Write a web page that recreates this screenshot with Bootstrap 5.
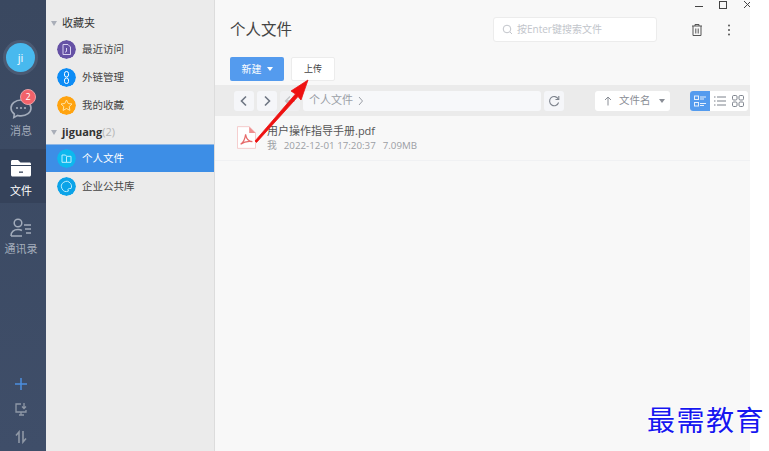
<!DOCTYPE html>
<html lang="zh">
<head>
  <meta charset="UTF-8">
  <meta name="viewport" content="width=device-width, initial-scale=1.0">
  <title>个人文件</title>
  <link href="https://cdn.jsdelivr.net/npm/bootstrap@5.3.0/dist/css/bootstrap.min.css" rel="stylesheet">
  <style>
    html, body { height: 451px; overflow: hidden; background: #fff; }
    body { font-family: "Open Sans", "Noto Sans CJK SC", sans-serif; width: 769px; position: relative; }
    .app-win { width: 750px; height: 451px; }

    /* left rail */
    .rail { width: 46px; background: linear-gradient(#3a4860, #3f4e69); padding-top: 40px; }
    .avatar-ring { width: 35px; height: 35px; border-radius: 50%; background: #4b5a73; margin-left: 3px; padding: 3px; }
    .avatar-dot { width: 29px; height: 29px; border-radius: 50%; background: #48b9ee; color: #fff; font-size: 11px; line-height: 29px; text-align: center; }
    .rail-item { color: #a3acbb; font-size: 11px; line-height: 13px; position: relative; padding-right: 4px; }
    .rail-item.on { background: #35425a; color: #fff; height: 54px; }
    .rail-msg { margin-top: 14px; height: 60px; padding-top: 4px; }
    .rail-msg svg { margin-bottom: 3px; }
    .rail-file svg { margin-bottom: 6px; }
    .rail-file { padding-bottom: 6px; }
    .rail-contacts { padding-top: 14px; }
    .rail-contacts svg { margin-bottom: 3px; }
    .msg-badge { position: absolute; top: 0; left: 20px; width: 16px; height: 16px; border-radius: 50%; background: #f2626a; border: 1px solid #e9a0a6; color: #fff; font-size: 9px; line-height: 14px; text-align: center; }
    .rail-tools { padding: 0 4px 7px 0; gap: 11px; }
    .rail-tools svg:last-child { margin-top: 3px; }

    /* tree panel */
    .tree { width: 169px; background: #ebebeb; border-right: 1px solid #dcdcdc; padding-top: 14px; color: #444; font-size: 10.5px; }
    .tree-head { height: 18px; padding-left: 5px; font-size: 11px; color: #333; }
    .tree-head b { font-size: 11px; font-weight: 700; }
    .tree-head span.cnt { color: #b4b4b4; font-size: 11px; }
    .head-text { padding-top: 1px; }
    .caret-g { width: 0; height: 0; border-left: 3px solid transparent; border-right: 3px solid transparent; border-top: 5px solid #a9aeb8; margin-right: 5px; }
    .tree-row { height: 28px; padding-left: 11px; gap: 6px; }
    .tree-row span { padding-top: 1px; }
    .tree-row.on { background: #3d8ee6; color: #fff; border-top: 1px solid #8db7e6; }
    .tree-ic { width: 19px; height: 19px; border-radius: 50%; flex: none; }
    .gap-head { margin-top: 3px; }
    .gap-row { margin-top: 3px; }
    .gap-group { margin-top: 4px; }

    /* main */
    .main-pane { background: #f8f8f8; min-width: 0; position: relative; overflow: hidden; }
    .win-btns { position: absolute; top: 0; right: -2px; gap: 12px; height: 12px; }
    .win-close { margin-left: 2px; }
    .head-line { height: 57px; padding: 2px 15px 0; }
    .page-title { font-size: 15.5px; color: #444; margin: 0; font-weight: 400; }
    .search-box { width: 164px; height: 25px; background: #fff; border: 1px solid #ececec; border-radius: 3px; margin-left: auto; padding-left: 8px; gap: 4px; color: #c2c5cb; font-size: 10px; margin-right: 33px; }
    .more-dots { margin-left: 23px; margin-right: 4px; }
    .action-line { height: 28px; padding-left: 15px; gap: 7px; }
    .btn-new { width: 54px; height: 24px; background: #549bee; border: 0; color: #fff; font-size: 10px; border-radius: 2px; padding: 0; gap: 5px; }
    .btn-up { width: 44px; height: 24px; background: #fff; border: 1px solid #ececec; color: #444; font-size: 9px; border-radius: 2px; padding: 0; }
    .caret-w { width: 0; height: 0; border-left: 3px solid transparent; border-right: 3px solid transparent; border-top: 4px solid #fff; }
    .path-line { height: 31px; background: #ebebeb; padding-left: 19px; gap: 3px; }
    .sq-btn { width: 20px; height: 20px; background: #f5f6f9; border-radius: 3px; flex: none; }
    .path-box { width: 238px; height: 20px; background: #f7f8fa; border-radius: 3px; color: #9a9ea6; font-size: 11px; padding-left: 6px; gap: 4px; }
    .sort-box { width: 75px; height: 20px; background: #fff; border-radius: 3px; margin-left: 28px; color: #8a8e96; font-size: 10.5px; gap: 7px; padding-left: 9px; }
    .caret-d { width: 0; height: 0; border-left: 3px solid transparent; border-right: 3px solid transparent; border-top: 4px solid #8a8e96; margin-left: 1px; }
    .view-grp { margin-left: 17px; height: 20px; background: #fff; border-radius: 3px; width: 58px; overflow: hidden; }
    .view-btn { width: 20px; height: 20px; flex: none; }
    .view-btn.on { background: #549bee; }
    .view-btn.tight { margin-left: -2px; }
    .file-row { height: 45px; border-bottom: 1px solid #f0f1f3; padding: 0 0 2px 22px; gap: 11px; }
    .file-name { font-size: 11px; color: #555; line-height: 15px; }
    .file-meta { font-size: 9.75px; color: #9b9ea4; line-height: 13px; margin-top: 1px; }
    .file-meta span { margin-right: 7px; }

    /* overlays on the screenshot */
    .red-arrow { position: absolute; left: 250px; top: 76px; pointer-events: none; }
    .water-mark { position: absolute; left: 647px; top: 402px; font-family: "Noto Sans CJK SC", sans-serif; font-size: 28px; line-height: 34px; letter-spacing: 1.5px; color: #1616f0; white-space: nowrap;
      text-shadow: 0 0 2px #fff, 0 0 2px #fff, 0 0 3px #fff; }
  </style>
</head>
<body>
  <div class="app-win d-flex">
    <!-- left rail -->
    <div class="rail d-flex flex-column flex-shrink-0">
      <div class="avatar-ring"><div class="avatar-dot">ji</div></div>
      <div class="rail-item rail-msg d-flex flex-column align-items-center">
        <svg width="24" height="28" viewBox="0 0 24 28"><path d="M12 7c-5.500 0-10 3.600-10 8 0 2.500 1.300 4.500 3.300 6l-.5 3.500 4-2.100c1 .3 2 .5 3.200.5 5.500 0 10-3.500 10-7.900S17.500 7 12 7z" fill="none" stroke="#a3acbb" stroke-width="1.600"/><circle cx="8" cy="15" r="1.100" fill="#a3acbb"/><circle cx="12" cy="15" r="1.100" fill="#a3acbb"/><circle cx="16" cy="15" r="1.100" fill="#a3acbb"/></svg>
        <span class="msg-badge">2</span>
        <span>消息</span>
      </div>
      <div class="rail-item rail-file on d-flex flex-column align-items-center justify-content-end">
        <svg width="22" height="20" viewBox="0 0 22 20"><path d="M1 3.500C1 2.500 1.800 2 2.500 2H8l2.500 2.500h9c.8 0 1.500.6 1.500 1.500v1H1z" fill="#fff"/><path d="M1 8h20v9c0 .9-.7 1.500-1.500 1.500h-17C1.700 18.500 1 17.900 1 17z" fill="#fff"/><rect x="9" y="13.500" width="4" height="1.300" fill="#35425a"/></svg>
        <span>文件</span>
      </div>
      <div class="rail-item rail-contacts d-flex flex-column align-items-center">
        <svg width="24" height="22" viewBox="0 0 24 22"><circle cx="9" cy="6" r="3.800" fill="none" stroke="#a3acbb" stroke-width="1.500"/><path d="M2 19c0-4.200 3-6.500 7-6.500 1.500 0 2.800.3 3.900 1M2 19h11" fill="none" stroke="#a3acbb" stroke-width="1.500"/><path d="M15 8h7M16 12h6M17 16h5" stroke="#a3acbb" stroke-width="1.400"/></svg>
        <span>通讯录</span>
      </div>
      <div class="rail-tools mt-auto d-flex flex-column align-items-center">
        <svg width="14" height="14" viewBox="0 0 14 14"><path d="M7 1v12M1 7h12" stroke="#4c8fe0" stroke-width="1.500"/></svg>
        <svg width="14" height="14" viewBox="0 0 14 14"><path d="M7 2H2v8h10V8M5 13h5M7 10v3" fill="none" stroke="#8f98a6" stroke-width="1.300"/><path d="M10 1v5M8 4.500l2 2 2-2" fill="none" stroke="#8f98a6" stroke-width="1.300"/></svg>
        <svg width="14" height="14" viewBox="0 0 14 14"><path d="M5 13V2L2 5.500M9 1v11l3-3.500" fill="none" stroke="#8f98a6" stroke-width="1.600"/></svg>
      </div>
    </div>

    <!-- folder tree -->
    <div class="tree flex-shrink-0">
      <div class="tree-head d-flex align-items-center"><i class="caret-g"></i><span class="head-text">收藏夹</span></div>
      <div class="tree-row d-flex align-items-center gap-row">
        <svg class="tree-ic" viewBox="0 0 19 19"><circle cx="9.500" cy="9.500" r="9.500" fill="#6551a5"/><path d="M6 4.500h5l2.500 2.500v7.500H6z" fill="none" stroke="#d8d0f0" stroke-width="1"/><path d="M9.500 8v3.500l-1.500.8" fill="none" stroke="#d8d0f0" stroke-width="1"/></svg>
        <span>最近访问</span>
      </div>
      <div class="tree-row d-flex align-items-center">
        <svg class="tree-ic" viewBox="0 0 19 19"><circle cx="9.500" cy="9.500" r="9.500" fill="#0d8cf5"/><rect x="7.500" y="3.500" width="4" height="5.500" rx="2" fill="none" stroke="#fff" stroke-width="1"/><rect x="7.500" y="10" width="4" height="5.500" rx="2" fill="none" stroke="#fff" stroke-width="1"/></svg>
        <span>外链管理</span>
      </div>
      <div class="tree-row d-flex align-items-center">
        <svg class="tree-ic" viewBox="0 0 19 19"><circle cx="9.500" cy="9.500" r="9.500" fill="#ffa30f"/><path d="M9.500 4l1.700 3.500 3.800.5-2.800 2.600.7 3.800-3.400-1.900-3.400 1.900.7-3.800L4 8l3.800-.5z" fill="none" stroke="#ffe3a8" stroke-width="1"/></svg>
        <span>我的收藏</span>
      </div>
      <div class="tree-head d-flex align-items-center gap-group"><i class="caret-g"></i><b>jiguang</b><span class="cnt">(2)</span></div>
      <div class="tree-row on d-flex align-items-center gap-head">
        <svg class="tree-ic" viewBox="0 0 19 19"><circle cx="9.500" cy="9.500" r="9.500" fill="#0db8ee"/><path d="M5 6h3.500l1 1.300H14v6H5z" fill="none" stroke="#bdeeff" stroke-width="1"/><path d="M9.500 7.500v5.500" stroke="#bdeeff" stroke-width="1"/></svg>
        <span>个人文件</span>
      </div>
      <div class="tree-row d-flex align-items-center">
        <svg class="tree-ic" viewBox="0 0 19 19"><circle cx="9.500" cy="9.500" r="9.500" fill="#0ba3e8"/><path d="M13.500 6.500a5 5 0 1 0-2 7.500c-1-1.500-.5-2.500 1-2.500h1.500c1-2 .5-3.500-.5-5z" fill="none" stroke="#bdeeff" stroke-width="1"/></svg>
        <span>企业公共库</span>
      </div>
    </div>

    <!-- main pane -->
    <div class="main-pane flex-grow-1 d-flex flex-column">
      <div class="win-btns d-flex align-items-center">
        <svg width="12" height="12" viewBox="0 0 12 12"><path d="M2 6.500h8" stroke="#444" stroke-width="1"/></svg>
        <svg width="12" height="12" viewBox="0 0 12 12"><rect x="2.500" y="1.500" width="7" height="7" fill="none" stroke="#444" stroke-width="1"/></svg>
        <svg class="win-close" width="9" height="12" viewBox="0 0 9 12"><path d="M1 1l7 7M8 1L1 8" stroke="#444" stroke-width="1"/></svg>
      </div>
      <div class="head-line d-flex align-items-center">
        <h1 class="page-title">个人文件</h1>
        <div class="search-box d-flex align-items-center">
          <svg width="11" height="11" viewBox="0 0 11 11"><circle cx="5" cy="5" r="3.800" fill="none" stroke="#c2c5cb" stroke-width="1"/><path d="M8 8l2 2" stroke="#c2c5cb" stroke-width="1"/></svg>
          <span>按Enter键搜索文件</span>
        </div>
        <svg width="14" height="14" viewBox="0 0 14 14"><path d="M2 3h10M5 3V1.500h4V3M3 3v9.500h8V3M5.800 5.500v5M8.200 5.500v5" fill="none" stroke="#555" stroke-width="1"/></svg>
        <svg class="more-dots" width="4" height="14" viewBox="0 0 4 14"><circle cx="2" cy="2.500" r="1" fill="#555"/><circle cx="2" cy="7" r="1" fill="#555"/><circle cx="2" cy="11.500" r="1" fill="#555"/></svg>
      </div>
      <div class="action-line d-flex align-items-start">
        <button class="btn btn-new d-flex align-items-center justify-content-center">新建<i class="caret-w"></i></button>
        <button class="btn btn-up">上传</button>
      </div>
      <div class="path-line d-flex align-items-center">
        <div class="sq-btn d-flex align-items-center justify-content-center"><svg width="10" height="12" viewBox="0 0 10 12"><path d="M7 1.500L2.500 6 7 10.500" fill="none" stroke="#6e7683" stroke-width="1.600"/></svg></div>
        <div class="sq-btn d-flex align-items-center justify-content-center"><svg width="10" height="12" viewBox="0 0 10 12"><path d="M3 1.500L7.500 6 3 10.500" fill="none" stroke="#6e7683" stroke-width="1.600"/></svg></div>
        <div class="sq-btn d-flex align-items-center justify-content-center opacity-50"><svg width="12" height="12" viewBox="0 0 12 12"><path d="M6 1.500L1.500 6 6 10.500M1.500 6H11" fill="none" stroke="#9a9ea6" stroke-width="1.300"/></svg></div>
        <div class="path-box d-flex align-items-center"><span>个人文件</span><svg width="8" height="10" viewBox="0 0 8 10"><path d="M2 1l3.500 4L2 9" fill="none" stroke="#9a9ea6" stroke-width="1"/></svg></div>
        <div class="sq-btn d-flex align-items-center justify-content-center"><svg width="12" height="12" viewBox="0 0 12 12"><path d="M10.300 4A4.600 4.600 0 1 0 10.600 7.500" fill="none" stroke="#7c828c" stroke-width="1.100"/><path d="M10.800 1v3.500H7.500" fill="none" stroke="#7c828c" stroke-width="1.100"/></svg></div>
        <div class="sort-box d-flex align-items-center">
          <svg width="8" height="10" viewBox="0 0 8 10"><path d="M4 9.500V1M1 4l3-3 3 3" fill="none" stroke="#8a8e96" stroke-width="1"/></svg>
          <span>文件名</span><i class="caret-d"></i>
        </div>
        <div class="view-grp d-flex">
          <div class="view-btn on d-flex align-items-center justify-content-center"><svg width="12" height="12" viewBox="0 0 12 12"><g fill="none" stroke="#e6f0fc" stroke-width="1"><rect x=".5" y="1" width="4" height="3.500"/><rect x=".5" y="7.500" width="4" height="3.500"/><path d="M6 2h6M6 4h4M6 8.500h6M6 10.500h4"/></g></svg></div>
          <div class="view-btn d-flex align-items-center justify-content-center"><svg width="12" height="12" viewBox="0 0 12 12"><path d="M3 2h9M3 6h9M3 10h9M0 2h1.500M0 6h1.500M0 10h1.500" stroke="#7c828c" stroke-width="1"/></svg></div>
          <div class="view-btn tight d-flex align-items-center justify-content-center"><svg width="12" height="12" viewBox="0 0 12 12"><g fill="none" stroke="#7c828c" stroke-width="1"><rect x=".5" y=".5" width="4.500" height="4.500" rx="1.200"/><rect x="7" y=".5" width="4.500" height="4.500" rx="1.200"/><rect x=".5" y="7" width="4.500" height="4.500" rx="1.200"/><rect x="7" y="7" width="4.500" height="4.500" rx="1.200"/></g></svg></div>
        </div>
      </div>
      <div class="file-row d-flex align-items-center">
        <svg width="19" height="23" viewBox="0 0 21 25" class="flex-shrink-0"><path d="M.5.500h13l7 7v17H.5z" fill="#fff" stroke="#f3c6c6"/><path d="M13.500.500l7 7h-7z" fill="#ef8f8f"/><path d="M4 20c3-2 5-7 5.500-11 .8 5 3 8 7.500 8-4.500-.8-9 0-13 3z" fill="none" stroke="#e66a6a" stroke-width="1.300"/></svg>
        <div>
          <div class="file-name">用户操作指导手册.pdf</div>
          <div class="file-meta"><span>我</span><span>2022-12-01 17:20:37</span><span>7.09MB</span></div>
        </div>
      </div>
    </div>
  </div>

  <!-- red arrow annotation -->
  <svg class="red-arrow" width="62" height="70" viewBox="0 0 62 70">
    <path d="M58 4L41 15l4.500 3L5 65l1.500 1.500L48 20.500l3 3.500z" fill="#ee1111" stroke="#ee1111" stroke-width=".8"/>
  </svg>
  <div class="water-mark">最需教育</div>
</body>
</html>
